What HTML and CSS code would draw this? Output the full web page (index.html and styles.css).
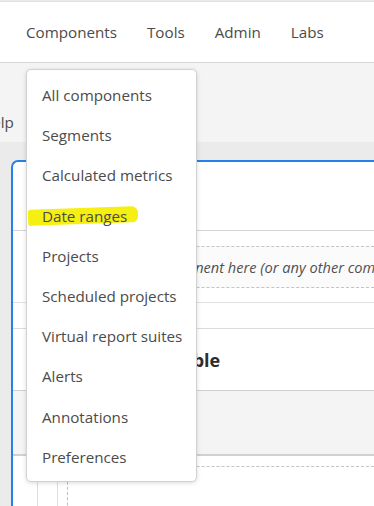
FILE: index.html
```html
<!DOCTYPE html>
<html lang="en">
<head>
    <meta charset="UTF-8">
    <title>Analysis Workspace</title>
    <link rel="stylesheet" href="styles.css">
</head>
<body>
    <div class="topbar">
        <span class="nav-item">Components</span>
        <span class="nav-item">Tools</span>
        <span class="nav-item">Admin</span>
        <span class="nav-item">Labs</span>
    </div>

    <div class="subbar">
        <span class="help">Help</span>
    </div>

    <div class="workspace">
        <div class="panel">
            <div class="panel-head"></div>
            <div class="drop-row">
                <div class="drop-zone">Drop a component here (or any other component)</div>
            </div>
            <div class="spacer-row"></div>
            <div class="table-title">Freeform table</div>
            <div class="table-head"></div>
            <div class="table-body">
                <div class="col col-a"></div>
                <div class="col col-b"></div>
                <div class="col col-c"></div>
            </div>
        </div>
    </div>

    <ul class="menu">
        <li>All components</li>
        <li>Segments</li>
        <li>Calculated metrics</li>
        <li class="marked">Date ranges</li>
        <li>Projects</li>
        <li>Scheduled projects</li>
        <li>Virtual report suites</li>
        <li>Alerts</li>
        <li>Annotations</li>
        <li>Preferences</li>
    </ul>
</body>
</html>
```

FILE: styles.css
```css
body {
    font-family: 'Open Sans', sans-serif;
    margin: 0;
    padding: 0;
    width: 374px;
    height: 506px;
    overflow: hidden;
    background-color: #ebebeb;
    color: #4b4b4b;
    position: relative;
}
.topbar {
    height: 60px;
    background-color: white;
    border-top: 1px solid #e1e1e1;
    border-bottom: 1px solid #d6d6d6;
    margin-top: 1px;
    display: flex;
    align-items: center;
    padding-left: 26px;
    gap: 30px;
    font-size: 15.2px;
}
.subbar {
    height: 79px;
    background-color: #f4f4f4;
    display: flex;
    align-items: flex-end;
    padding-bottom: 9px;
    box-sizing: border-box;
    font-size: 15.2px;
}
.help {
    margin-left: -19px;
    margin-bottom: 1px;
}
.workspace {
    padding: 18px 0 0 11px;
    height: 364px;
    box-sizing: border-box;
}
.panel {
    background-color: white;
    border-left: 2px solid #2680eb;
    border-top: 2px solid #2680eb;
    border-top-left-radius: 7px;
    height: 100%;
}
.panel-head {
    height: 68px;
    border-bottom: 1px solid #d3d3d3;
}
.drop-row {
    height: 72px;
    padding-top: 15px;
    box-sizing: border-box;
    border-bottom: 1px solid #e1e1e1;
}
.drop-zone {
    height: 42px;
    margin-left: 14px;
    border-top: 1px dashed #c4c4c4;
    border-bottom: 1px dashed #c4c4c4;
    background-color: #fbfbfb;
    box-sizing: border-box;
    display: flex;
    align-items: center;
    padding-left: 76px;
    font-style: italic;
    font-size: 14.6px;
    white-space: nowrap;
    color: #505050;
}
.spacer-row {
    height: 26px;
    box-sizing: border-box;
    border-bottom: 1px solid #dcdcdc;
}
.table-title {
    height: 62px;
    box-sizing: border-box;
    border-bottom: 1px solid #cfcfcf;
    display: flex;
    align-items: center;
    padding-left: 73px;
    font-weight: bold;
    font-size: 18px;
    color: #2c2c2c;
}
.table-head {
    height: 65px;
    box-sizing: border-box;
    background-color: #f4f4f4;
    border-bottom: 2px solid #d0d0d0;
}
.table-body {
    display: flex;
    height: 60px;
}
.col {
    box-sizing: border-box;
}
.col-a {
    width: 25px;
    border-right: 1px solid #dedede;
}
.col-b {
    width: 20px;
    border-right: 1px solid #dedede;
}
.col-c {
    flex: 1;
    margin-left: 9px;
    margin-top: 10px;
    border-left: 1px dashed #bdbdbd;
    border-top: 1px dashed #c4c4c4;
}
.menu {
    position: absolute;
    left: 26px;
    top: 69px;
    width: 171px;
    height: 413px;
    margin: 0;
    padding: 5px 0 4px 0;
    box-sizing: border-box;
    list-style: none;
    background-color: white;
    border: 1px solid #d2d2d2;
    border-radius: 5px;
    box-shadow: 0 1px 4px rgba(0, 0, 0, 0.15);
    font-size: 15.2px;
}
.menu li {
    height: 40.2px;
    line-height: 40.2px;
    padding-left: 15px;
    white-space: nowrap;
}
.marked {
    position: relative;
    z-index: 0;
}
.marked::before {
    content: '';
    position: absolute;
    left: 1px;
    top: 12px;
    width: 110px;
    height: 16px;
    background-color: #f6ef12;
    border-radius: 3px 6px 6px 2px;
    transform: rotate(-2deg);
    z-index: -1;
}
```
